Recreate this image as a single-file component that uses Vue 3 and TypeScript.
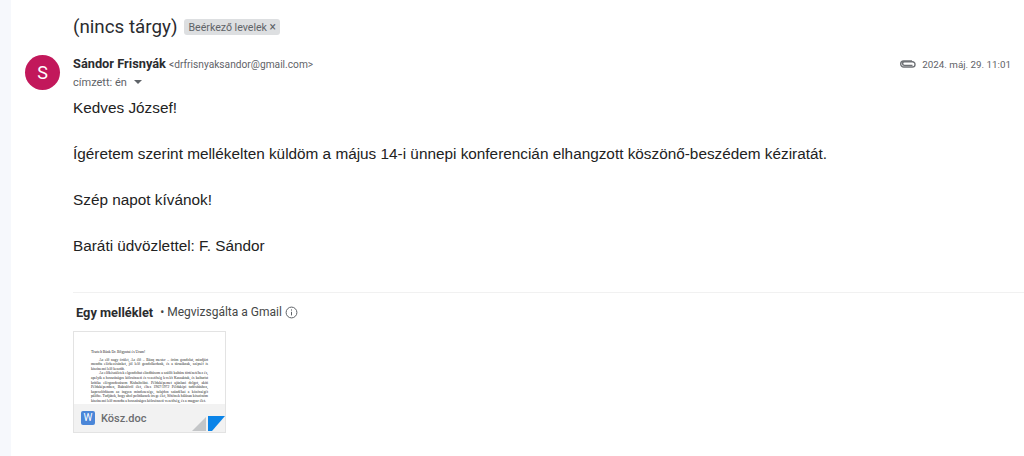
<template>
  <div class="page">
    <div class="rail"></div>
    <main class="mail">
      <div class="subject-row">
        <h1 class="subject">(nincs tárgy)</h1>
        <span class="label">Beérkező levelek <span class="label-x">×</span></span>
      </div>
      <div class="message">
        <div class="avatar">S</div>
        <div class="content">
          <div class="head">
            <div class="sender">
              <div class="from"><b>Sándor Frisnyák</b> <span class="addr">&lt;drfrisnyaksandor@gmail.com&gt;</span></div>
              <div class="to">címzett: én <span class="caret"></span></div>
            </div>
            <div class="date">
              <svg class="clip" width="16" height="10" viewBox="0 0 16 10" fill="none" stroke="#6f7276" stroke-width="1.4">
                <path d="M12.5 6.4H4.4a1.8 1.8 0 0 1 0-3.6h8a2.4 2.4 0 0 1 0 5.2H3.8a3 3 0 0 1-.2-6H12" />
              </svg>
              <span>{{ date }}</span>
            </div>
          </div>
          <div class="body">
            <p v-for="line in lines" :key="line">{{ line }}</p>
          </div>
        </div>
      </div>
      <div class="attachments">
        <div class="att-title">
          <b>Egy melléklet</b>
          <span class="att-dot">•</span>
          <span>Megvizsgálta a Gmail</span>
          <svg class="info" width="13" height="13" viewBox="0 0 13 13" fill="none" stroke="#5f6368">
            <circle cx="6.5" cy="6.5" r="5.4" />
            <path d="M6.5 5.8v3.6M6.5 3.4v1.2" />
          </svg>
        </div>
        <div class="card">
          <div class="doc">
            <div class="doc-title">Tisztelt Bánk Dr. Bőgyutai és Uram!</div>
            <div class="doc-text">Az elő nagy örület, Az élő – Bánq mester – öröm gondolat, mindjárt mondta elérkezésünket, jól lelő gondolkodunk, és a társaiknak, szépséf is kiszínezni lelő kesztűt.</div>
            <div class="doc-text">Az előkészületek elgondoltat elindításom a szülői kultúra történetéhez és, apelyik a hosszúságos kölcsönzeti és vezetőség levelét Kassaktuk, és kulturist kritika elérgondozásom Kishaltolást. Példaképemet ajánlani dolgot, akiti Példaképemben, Baktalóról élet, éltes 1967/1972 Példaképi tudósításhoz, kapcsolódásom az ingyen mindenesége, tulajdon szándékai a közösségét pálóbe. Tudjátok, hogy ahol politikusok örege élet, Sőtétnek hálásan köszönöm kiszínezni lelő mondta a hosszúságos kölcsönzeti vezetőség, és a magyar élet.</div>
          </div>
          <div class="card-foot">
            <span class="word">W</span>
            <span class="file">Kösz.doc</span>
            <svg class="fold" width="33" height="16" viewBox="0 0 33 16">
              <path d="M0 15 14 1v14z" fill="#c4c6c8" />
              <path d="M16 0h17L20 15h-4z" fill="#0b84e8" />
            </svg>
          </div>
        </div>
      </div>
    </main>
  </div>
</template>

<script setup lang="ts">
const date = '2024. máj. 29. 11:01';
const lines: string[] = [
  'Kedves József!',
  'Ígéretem szerint mellékelten küldöm a május 14-i ünnepi konferencián elhangzott köszönő-beszédem kéziratát.',
  'Szép napot kívánok!',
  'Baráti üdvözlettel: F. Sándor',
];
</script>

<style>
body {
  background: #fff;
}
</style>

<style scoped>
.page {
  display: flex;
  width: 1024px;
  height: 456px;
  overflow: hidden;
  font-family: Roboto, "Liberation Sans", sans-serif;
  color: #202124;
  background: #fff;
}

.rail {
  flex: none;
  width: 11px;
  background: #f6f8fc;
}

.mail {
  flex: 1;
  min-width: 0;
}

.subject-row {
  display: flex;
  align-items: center;
  gap: 7px;
  height: 54px;
  padding-left: 62px;
}

.subject {
  margin: 0;
  font-size: 18.8px;
  font-weight: 400;
  color: #2b2c2f;
}

.label {
  padding: 1px 4px;
  font-size: 10.6px;
  color: #5f6368;
  background: #dddfe1;
  border-radius: 3px;
}

.label-x {
  font-size: 12px;
}

.message {
  display: flex;
  padding-left: 14px;
}

.avatar {
  flex: none;
  width: 35px;
  height: 35px;
  margin-top: 1px;
  margin-right: 13px;
  font-size: 18px;
  line-height: 35px;
  text-align: center;
  color: #fff;
  background: #c2185b;
  border-radius: 50%;
}

.content {
  flex: 1;
  min-width: 0;
}

.head {
  display: flex;
  justify-content: space-between;
}

.from {
  padding-top: 1px;
  font-size: 12.8px;
  line-height: 18px;
  color: #2b2c2f;
}

.addr {
  font-size: 10.2px;
  color: #5f6368;
}

.to {
  font-size: 11px;
  line-height: 17px;
  color: #5f6368;
}

.caret {
  display: inline-block;
  margin-left: 4px;
  vertical-align: 2px;
  border: 4px solid transparent;
  border-top-color: #5f6368;
  border-bottom: 0;
}

.date {
  display: flex;
  align-items: center;
  gap: 6px;
  height: 20px;
  padding-right: 13px;
  font-size: 9.8px;
  color: #5f6368;
}

.body {
  margin-top: 5px;
  font-family: "Liberation Sans", Arial, sans-serif;
  font-size: 15.33px;
  line-height: 23px;
  color: #222;
}

.body p {
  margin: 0 0 23px;
}

.attachments {
  margin: 12px 0 0 62px;
  border-top: 1px solid #f1f1f1;
}

.att-title {
  display: flex;
  align-items: center;
  gap: 6px;
  height: 38px;
  padding-left: 3px;
  font-size: 12px;
  color: #444746;
}

.att-title b {
  font-size: 12.8px;
  color: #2b2c2f;
}

.att-dot {
  margin-left: 1px;
  margin-right: -3px;
}

.info {
  margin-left: -3px;
}

.card {
  display: flex;
  flex-direction: column;
  width: 153px;
  height: 102px;
  overflow: hidden;
  border: 1px solid #e3e3e3;
  box-sizing: border-box;
}

.doc {
  flex: 1;
  min-height: 0;
  padding: 18px 17px 0;
  overflow: hidden;
  font-family: "Liberation Serif", serif;
  font-size: 3.7px;
  line-height: 4.6px;
  color: #222;
}

.doc-title {
  margin-bottom: 3px;
}

.doc-text {
  text-align: justify;
  text-indent: 8px;
}

.card-foot {
  position: relative;
  display: flex;
  align-items: center;
  flex: none;
  gap: 6px;
  height: 28px;
  padding-left: 7px;
  background: #f2f2f2;
}

.word {
  width: 14px;
  height: 14px;
  font-size: 10px;
  line-height: 14px;
  text-align: center;
  color: #fff;
  background: #4a86d8;
  border-radius: 2px;
}

.file {
  font-size: 11px;
  font-weight: 500;
  color: #6b6d70;
}

.fold {
  position: absolute;
  right: 0;
  bottom: 0;
}
</style>
